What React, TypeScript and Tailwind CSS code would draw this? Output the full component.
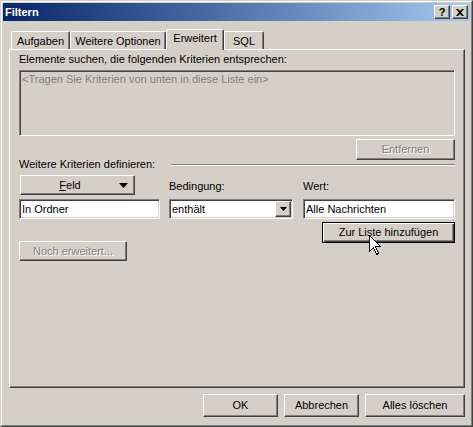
import React from 'react';

const raised =
  'border border-t-white border-l-white border-r-[#404040] border-b-[#404040] shadow-[inset_-1px_-1px_#808080] bg-[#d4d0c8]';
const sunken =
  'border border-t-[#808080] border-l-[#808080] border-r-white border-b-white shadow-[inset_1px_1px_#404040,inset_-1px_-1px_#d4d0c8]';
const disabledText = 'text-[#808080] [text-shadow:1px_1px_0_#ffffff]';

const Tab = ({ label, width, active }: { label: string; width: string; active?: boolean }) => (
  <div
    className={`${width} ${
      active ? 'h-[21px] -mb-px relative z-10 pt-[2px]' : 'h-[18px] pt-[3px]'
    } border-t border-l border-r border-t-white border-l-white border-r-[#404040] shadow-[inset_-1px_0_#808080] rounded-tl-[2px] rounded-tr-[2px] bg-[#d4d0c8] text-center leading-[13px]`}
  >
    {label}
  </div>
);

const Cursor = () => (
  <svg width="12" height="20" viewBox="0 0 12 20" className="absolute left-[369px] top-[235px] z-20">
    <path
      d="M0.5 0.5 L0.5 16.5 L4.5 12.5 L7.5 19.5 L9.5 18.5 L6.5 11.5 L11.5 11.5 Z"
      fill="#ffffff"
      stroke="#000000"
      strokeWidth="1"
      shapeRendering="crispEdges"
    />
  </svg>
);

export default function App() {
  return (
    <div className="relative w-[473px] h-[427px] font-['Liberation_Sans',Arial,sans-serif] text-[11px] text-black select-none">
      <div className="h-full bg-[#d4d0c8] border border-t-[#d4d0c8] border-l-[#d4d0c8] border-r-[#404040] border-b-[#404040]">
        <div className="h-full flex flex-col p-px border border-t-white border-l-white border-r-[#808080] border-b-[#808080]">
          {/* title bar */}
          <div className="h-[18px] flex items-center pl-[2px] pr-[2px] bg-gradient-to-r from-[#0a246a] to-[#a6caf0]">
            <span className="flex-1 text-white font-bold leading-[13px]">Filtern</span>
            <div className={`${raised} w-[16px] h-[14px] flex items-center justify-center font-bold text-[11px] leading-[11px]`}>
              ?
            </div>
            <div className={`${raised} ml-[2px] w-[16px] h-[14px] flex items-center justify-center`}>
              <svg width="8" height="7" viewBox="0 0 8 7">
                <path d="M0 0h2l2 2 2-2h2L5 3.5 8 7H6L4 5 2 7H0l3-3.5z" fill="#000" />
              </svg>
            </div>
          </div>

          {/* tabs */}
          <div className="h-[28px] flex items-end pl-[8px]">
            <Tab label="Aufgaben" width="w-[59px]" />
            <Tab label="Weitere Optionen" width="w-[96px]" />
            <Tab label="Erweitert" width="w-[58px]" active />
            <Tab label="SQL" width="w-[40px]" />
          </div>

          {/* tab panel */}
          <div className="ml-[6px] w-[456px] h-[339px] border border-t-white border-l-white border-r-[#404040] border-b-[#404040] shadow-[inset_-1px_-1px_#808080] pl-[9px] pr-[9px] pt-[3px]">
            <div className="leading-[13px]">Elemente suchen, die folgenden Kriterien entsprechen:</div>
            <div className={`${sunken} mt-[4px] h-[66px] px-[2px] pt-[2px] leading-[13px] text-[#808080] bg-[#d4d0c8]`}>
              &lt;Tragen Sie Kriterien von unten in diese Liste ein&gt;
            </div>
            <div className="flex justify-end mt-[3px]">
              <div className={`${raised} w-[99px] h-[21px] flex items-center justify-center ${disabledText}`}>Entfernen</div>
            </div>

            <div className="-mt-[2px] h-[13px] flex items-center">
              <span className="w-[152px] leading-[13px]">Weitere Kriterien definieren:</span>
              <div className="flex-1 h-[2px] border-t border-t-[#808080] border-b border-b-white" />
            </div>

            <div className="mt-[4px] flex items-end">
              <div className="w-[141px]">
                <div className={`${raised} ml-px w-[115px] h-[20px] flex items-center`}>
                  <span className="flex-1 text-center leading-[13px]">
                    <u>F</u>eld
                  </span>
                  <svg width="9" height="5" viewBox="0 0 9 5" className="mr-[6px]">
                    <polygon points="0,0 9,0 4.5,5" fill="#000" />
                  </svg>
                </div>
              </div>
              <div className="ml-[9px] w-[124px] pb-[2px] leading-[13px]">Bedingung:</div>
              <div className="ml-[10px] w-[152px] pb-[2px] leading-[13px]">Wert:</div>
            </div>

            <div className="mt-[4px] flex">
              <div className={`${sunken} w-[141px] h-[20px] bg-white flex items-center pl-[2px]`}>In Ordner</div>
              <div className={`${sunken} ml-[9px] w-[124px] h-[20px] bg-white flex items-stretch p-px`}>
                <span className="flex-1 flex items-center pl-px">enthält</span>
                <div className={`${raised} w-[16px] flex items-center justify-center`}>
                  <svg width="7" height="4" viewBox="0 0 7 4">
                    <polygon points="0,0 7,0 3.5,4" fill="#000" />
                  </svg>
                </div>
              </div>
              <div className={`${sunken} ml-[10px] w-[152px] h-[20px] bg-white flex items-center pl-[2px]`}>Alle Nachrichten</div>
            </div>

            <div className="mt-[3px] flex justify-between items-start">
              <div className={`${raised} mt-[19px] w-[108px] h-[20px] flex items-center justify-center ${disabledText}`}>
                Noch erweitert...
              </div>
              <div className="w-[133px] h-[21px] border border-black bg-[#d4d0c8] shadow-[inset_1px_1px_#ffffff,inset_-1px_-1px_#404040,inset_-2px_-2px_#808080] flex items-center justify-center">
                Zur Liste hinzufügen
              </div>
            </div>
          </div>

          {/* dialog buttons */}
          <div className="mt-[6px] mr-[5px] flex justify-end gap-[6px]">
            <div className={`${raised} w-[75px] h-[23px] flex items-center justify-center`}>OK</div>
            <div className={`${raised} w-[75px] h-[23px] flex items-center justify-center`}>Abbrechen</div>
            <div className={`${raised} w-[100px] h-[23px] flex items-center justify-center`}>Alles löschen</div>
          </div>
        </div>
      </div>
      <Cursor />
    </div>
  );
}
